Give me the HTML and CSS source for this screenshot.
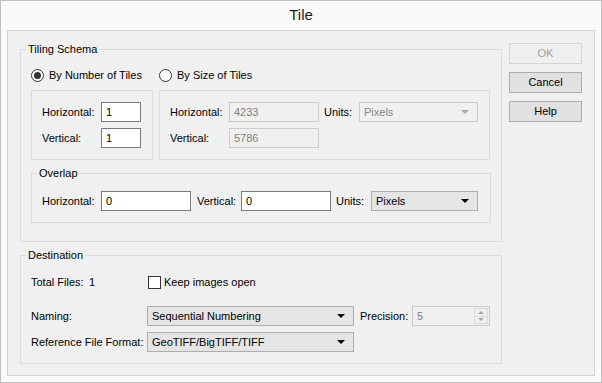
FILE: index.html
```html
<!DOCTYPE html>
<html lang="en">
<head>
    <meta charset="UTF-8">
    <title>Tile</title>
    <link rel="stylesheet" href="styles.css">
</head>
<body>
    <div class="window">
        <div class="titlebar">Tile</div>
        <div class="client">
            <div class="main">
                <!-- Tiling Schema -->
                <div class="group tiling">
                    <span class="group-title">Tiling Schema</span>
                    <div class="radio-row">
                        <div class="radio-opt"><span class="radio checked"></span>By Number of Tiles</div>
                        <div class="radio-opt"><span class="radio"></span>By Size of Tiles</div>
                    </div>
                    <div class="boxes">
                        <div class="box">
                            <div class="field-row">
                                <span class="lbl lbl-59">Horizontal:</span>
                                <span class="input w40">1</span>
                            </div>
                            <div class="field-row">
                                <span class="lbl lbl-59">Vertical:</span>
                                <span class="input w40">1</span>
                            </div>
                        </div>
                        <div class="box">
                            <div class="field-row">
                                <span class="lbl lbl-59">Horizontal:</span>
                                <span class="input disabled w90">4233</span>
                                <span class="lbl lbl-units">Units:</span>
                                <span class="select disabled w119">Pixels<i class="arrow"></i></span>
                            </div>
                            <div class="field-row">
                                <span class="lbl lbl-59">Vertical:</span>
                                <span class="input disabled w90">5786</span>
                            </div>
                        </div>
                    </div>

                    <div class="group overlap">
                        <span class="group-title">Overlap</span>
                        <div class="field-row">
                            <span class="lbl lbl-59">Horizontal:</span>
                            <span class="input w90">0</span>
                            <span class="lbl lbl-vert">Vertical:</span>
                            <span class="input w90">0</span>
                            <span class="lbl lbl-units">Units:</span>
                            <span class="select w107">Pixels<i class="arrow"></i></span>
                        </div>
                    </div>
                </div>

                <!-- Destination -->
                <div class="group destination">
                    <span class="group-title">Destination</span>
                    <div class="total-row">
                        <span class="total-lbl">Total Files:</span>
                        <span class="total-val">1</span>
                        <span class="checkbox"></span>
                        <span>Keep images open</span>
                    </div>
                    <div class="field-row">
                        <span class="lbl lbl-116">Naming:</span>
                        <span class="select w207">Sequential Numbering<i class="arrow"></i></span>
                        <span class="lbl lbl-prec">Precision:</span>
                        <span class="input disabled w78">5<span class="spinner"><i class="up"></i><i class="down"></i></span></span>
                    </div>
                    <div class="field-row">
                        <span class="lbl lbl-116">Reference File Format:</span>
                        <span class="select w207">GeoTIFF/BigTIFF/TIFF<i class="arrow"></i></span>
                    </div>
                </div>
            </div>

            <div class="buttons">
                <div class="btn disabled">OK</div>
                <div class="btn">Cancel</div>
                <div class="btn">Help</div>
            </div>
        </div>
    </div>
</body>
</html>
```

FILE: styles.css
```css
/* Reset */
* {
    margin: 0;
    padding: 0;
    box-sizing: border-box;
}

body {
    font-family: 'Segoe UI', 'Liberation Sans', Arial, sans-serif;
    font-size: 11px;
    color: #000;
    background: #fff;
}

/* Window frame */
.window {
    width: 602px;
    height: 383px;
    border: 1px solid #bfbfbf;
    background: #fafafa;
}

.titlebar {
    height: 29px;
    line-height: 28px;
    text-align: center;
    font-size: 15px;
    color: #1a1a1a;
}

.client {
    display: flex;
    gap: 7px;
    height: 346px;
    margin: 0 6px;
    padding: 12px 12px 0 12px;
    background: #f0f0f0;
    border: 1px solid #d2d2d2;
}

.main {
    width: 482px;
    margin-top: 6px;
}

/* Group boxes */
.group {
    border: 1px solid #dcdcdc;
}

.group-title {
    display: table;
    margin: -9px 0 0 -5px;
    padding: 0 2px;
    line-height: 16px;
    background: #f0f0f0;
}

.tiling {
    padding: 0 10px 18px 10px;
}

.radio-row {
    display: grid;
    grid-template-columns: 128px auto;
    margin-top: 10px;
    line-height: 16px;
}

.radio-opt {
    display: flex;
    align-items: center;
    gap: 5px;
}

.radio {
    width: 13px;
    height: 13px;
    border: 1px solid #333;
    border-radius: 50%;
    background: #fff;
    display: flex;
    align-items: center;
    justify-content: center;
}

.radio.checked::after {
    content: '';
    width: 7px;
    height: 7px;
    border-radius: 50%;
    background: #333;
}

.boxes {
    display: grid;
    grid-template-columns: 122px 331px;
    gap: 6px;
    margin-top: 7px;
}

.box {
    border: 1px solid #dcdcdc;
    padding: 11px 10px;
    display: flex;
    flex-direction: column;
    gap: 6px;
}

.overlap {
    width: 460px;
    margin-top: 13px;
    padding: 0 10px 11px 10px;
}

.overlap .field-row {
    margin-top: 10px;
}

/* Field rows */
.field-row {
    display: flex;
    align-items: center;
    height: 20px;
}

.lbl {
    flex: none;
    white-space: nowrap;
}

.lbl-59 { width: 59px; }
.lbl-116 { width: 116px; }
.lbl-units { width: 35px; margin-left: 5px; }
.lbl-vert { width: 44px; margin-left: 6px; }
.lbl-prec { width: 52px; margin-left: 6px; }

.input, .select {
    flex: none;
    height: 20px;
    display: flex;
    align-items: center;
    padding-left: 4px;
    white-space: nowrap;
}

.input {
    background: #fff;
    border: 1px solid #7a7a7a;
}

.input.disabled {
    background: #f0f0f0;
    border-color: #cccccc;
    color: #7f7f7f;
}

.select {
    background: #e5e5e5;
    border: 1px solid #adadad;
}

.select.disabled {
    background: #f0f0f0;
    border-color: #cccccc;
    color: #838383;
}

.arrow {
    margin-left: auto;
    margin-right: 8px;
    border-left: 4px solid transparent;
    border-right: 4px solid transparent;
    border-top: 4px solid #000;
}

.select.disabled .arrow {
    border-top-color: #a8a8a8;
}

.w40 { width: 40px; }
.w78 { width: 78px; }
.w90 { width: 90px; }
.w107 { width: 107px; }
.w119 { width: 119px; }
.w207 { width: 207px; }

/* Spinner */
.spinner {
    margin-left: auto;
    margin-right: 1px;
    width: 14px;
    height: 16px;
    border: 1px solid #dadada;
    display: flex;
    flex-direction: column;
}

.spinner i {
    flex: 1;
    display: flex;
    align-items: center;
    justify-content: center;
}

.spinner .up {
    border-bottom: 1px solid #dadada;
}

.spinner .up::after, .spinner .down::after {
    content: '';
    border-left: 3px solid transparent;
    border-right: 3px solid transparent;
}

.spinner .up::after {
    border-bottom: 3px solid #a8a8a8;
}

.spinner .down::after {
    border-top: 3px solid #a8a8a8;
}

/* Destination */
.destination {
    margin-top: 13px;
    padding: 0 10px 11px 10px;
}

.total-row {
    display: flex;
    align-items: center;
    height: 16px;
    margin-top: 11px;
    margin-bottom: 16px;
}

.total-lbl { width: 58px; }
.total-val { width: 59px; }

.checkbox {
    width: 13px;
    height: 13px;
    border: 1px solid #333;
    background: #fff;
    margin-right: 3px;
}

.destination .field-row + .field-row {
    margin-top: 6px;
}

/* Buttons */
.buttons {
    display: flex;
    flex-direction: column;
    gap: 8px;
}

.btn {
    width: 73px;
    height: 21px;
    line-height: 19px;
    text-align: center;
    background: #e1e1e1;
    border: 1px solid #adadad;
}

.btn.disabled {
    background: #efefef;
    border-color: #d5d5d5;
    color: #a0a0a0;
}
```
